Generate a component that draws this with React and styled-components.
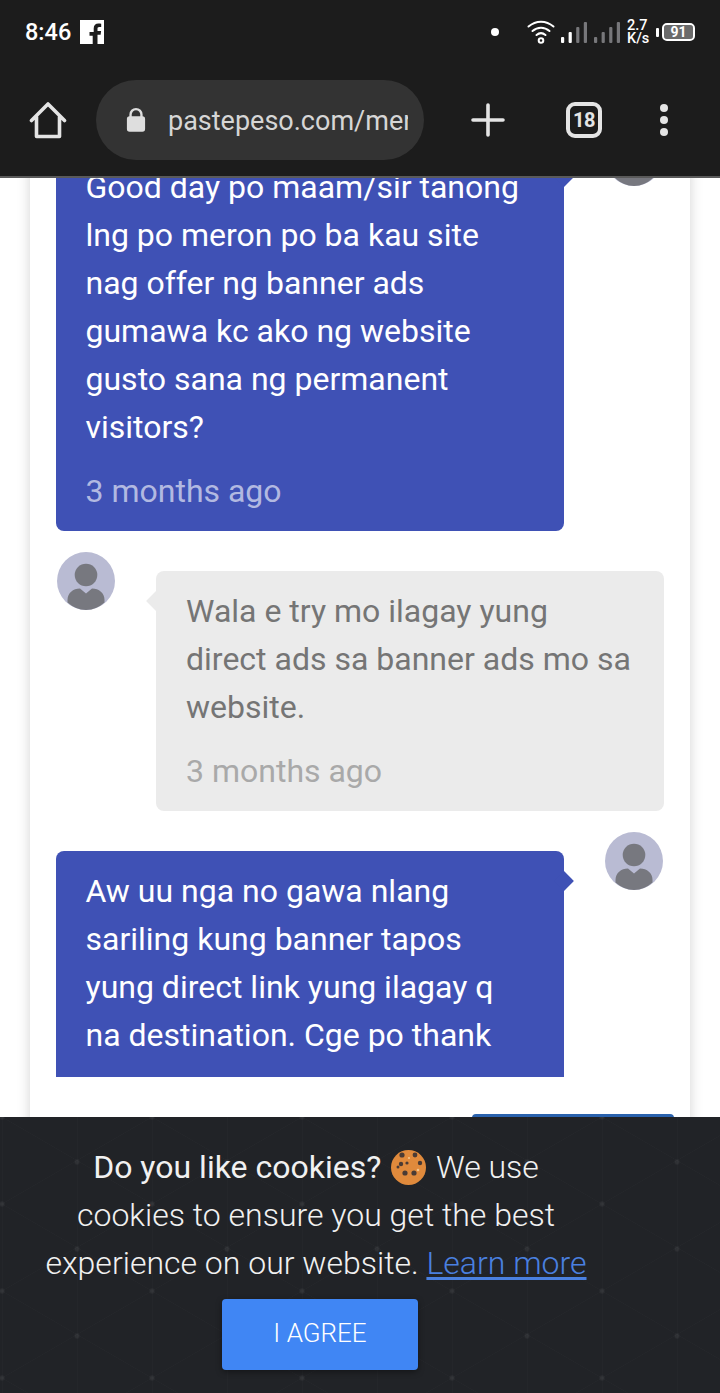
import React from "react";
import styled, { createGlobalStyle } from "styled-components";

const GlobalStyle = createGlobalStyle`
  html, body {
    margin: 0;
    padding: 0;
    background: #fff;
    font-family: Roboto, "Liberation Sans", sans-serif;
  }
  * {
    box-sizing: border-box;
  }
`;

const messages = [
  {
    id: 1,
    mine: true,
    text: "Good day po maam/sir tanong lng po meron po ba kau site nag offer ng banner ads gumawa kc ako ng website gusto sana ng permanent visitors?",
    time: "3 months ago",
  },
  {
    id: 2,
    mine: false,
    text: "Wala e try mo ilagay yung direct ads sa banner ads mo sa website.",
    time: "3 months ago",
  },
  {
    id: 3,
    mine: true,
    cut: true,
    text: "Aw uu nga no gawa nlang sariling kung banner tapos yung direct link yung ilagay q na destination. Cge po thank",
  },
];

const Avatar = () => (
  <AvatarIcon viewBox="0 0 58 58">
    <circle cx="29" cy="29" r="29" fill="#b9bbd3" />
    <circle cx="29" cy="23" r="11.300" fill="#77787f" />
    <path d="M29 41.500l6-5c7 0 12.500 4.500 12.500 11.500v2.500A29 29 0 0 1 29 58a29 29 0 0 1-18.500-7.500V48c0-7 5.500-11.500 12.500-11.500z" fill="#77787f" />
  </AvatarIcon>
);

const Bars = ({ lit }) => (
  <svg width="27" height="22" viewBox="0 0 27 22">
    {[0, 1, 2, 3].map((i) => (
      <rect
        key={i}
        x={i * 7.6}
        y={16 - i * 5}
        width="3.200"
        height={6 + i * 5}
        rx="1"
        fill={i < lit ? "#fff" : "#77777a"}
      />
    ))}
  </svg>
);

const App = () => {
  return (
    <React.Fragment>
      <GlobalStyle />
      <Screen>
        <Header>
          <StatusBar>
            <Clock>8:46</Clock>
            <svg width="24" height="24" viewBox="0 0 24 24">
              <path d="M0 0h24v24h-6.500v-9.300h3.100l.5-3.600h-3.600V8.800c0-1.100.3-1.800 1.800-1.800h1.900V3.800c-.3 0-1.500-.2-2.800-.2-2.800 0-4.700 1.700-4.700 4.800v3.700H9.500v3.600h3.200V24H0z" fill="#fff" />
            </svg>
            <StatusRight>
              <Dot />
              <svg width="28" height="26" viewBox="0 0 28 26">
                <g fill="none" stroke="#fff" strokeWidth="2" strokeLinecap="round">
                  <path d="M1.500 7.500C9 1 19 1 26.500 7.500" />
                  <path d="M5.500 12C10.500 7.500 17.500 7.500 22.500 12" />
                  <path d="M9.500 16c3-2.500 6-2.500 9 0" />
                  <circle cx="14" cy="21.500" r="2.300" />
                </g>
              </svg>
              <Bars lit={2} />
              <Bars lit={0} />
              <Speed>
                2.7
                <br />
                K/s
              </Speed>
              <Battery>
                <BatteryCap />
                <BatteryBody>91</BatteryBody>
              </Battery>
            </StatusRight>
          </StatusBar>
          <Toolbar>
            <svg width="38" height="38" viewBox="0 0 38 38">
              <path d="M2.500 19.500L19 3l16.500 16.500M7.500 16v19.500h23V16" fill="none" stroke="#e4e4e4" strokeWidth="3.600" strokeLinecap="round" strokeLinejoin="round" />
            </svg>
            <UrlPill>
              <LockIcon viewBox="0 0 22 28">
                <path d="M5 12V8a6 6 0 0 1 12 0v4" fill="none" stroke="#dedede" strokeWidth="2.600" />
                <rect x="1" y="10" width="20" height="17" rx="3" fill="#dedede" />
              </LockIcon>
              <UrlText>pastepeso.com/merchant</UrlText>
            </UrlPill>
            <svg width="34" height="34" viewBox="0 0 34 34">
              <path d="M17 2v30M2 17h30" stroke="#e4e4e4" strokeWidth="3.600" strokeLinecap="round" />
            </svg>
            <TabCount>18</TabCount>
            <MenuDots>
              <i />
              <i />
              <i />
            </MenuDots>
          </Toolbar>
        </Header>

        <Page>
          <Card>
            {messages.map((m) => (
              <Row key={m.id} $mine={m.mine}>
                <Avatar />
                <Bubble $mine={m.mine} $cut={m.cut}>
                  <BubbleText>{m.text}</BubbleText>
                  {m.time && <Time $mine={m.mine}>{m.time}</Time>}
                </Bubble>
              </Row>
            ))}
            <ReplyButton />
          </Card>
        </Page>

        <CookieBar>
          <CookieText>
            <strong>Do you like cookies?</strong>{" "}
            <CookieIcon viewBox="0 0 35 35">
              <circle cx="17.500" cy="17.500" r="17.500" fill="#e08a3c" />
              <circle cx="11" cy="5" r="2.600" fill="#4a3b35" />
              <circle cx="24" cy="5" r="2.400" fill="#4a3b35" />
              <circle cx="10" cy="14" r="2.200" fill="#4a3b35" />
              <circle cx="16" cy="13" r="1.600" fill="#4a3b35" />
              <circle cx="29" cy="13" r="2.200" fill="#4a3b35" />
              <circle cx="7" cy="17" r="1.500" fill="#4a3b35" />
              <circle cx="14" cy="23" r="2.600" fill="#4a3b35" />
              <circle cx="23" cy="23" r="2.600" fill="#4a3b35" />
              <circle cx="27" cy="20" r="1.300" fill="#f3c58c" />
              <circle cx="18" cy="8" r="1.100" fill="#f3c58c" />
            </CookieIcon>{" "}
            We use cookies to ensure you get the best experience on our website.{" "}
            <LearnMore href="#">Learn more</LearnMore>
          </CookieText>
          <AgreeButton>I AGREE</AgreeButton>
        </CookieBar>
      </Screen>
    </React.Fragment>
  );
};

const Screen = styled.div`
  position: relative;
  width: 720px;
  height: 1393px;
  overflow: hidden;
  display: flex;
  flex-direction: column;
  background: #fff;
`;

const Header = styled.header`
  position: relative;
  z-index: 2;
  flex: none;
  height: 178px;
  background: #1c1c1c;
  border-bottom: 2px solid #5a5a5a;
`;

const StatusBar = styled.div`
  height: 64px;
  display: flex;
  align-items: center;
  gap: 9px;
  padding: 0 25px;
`;

const Clock = styled.span`
  color: #fff;
  font-size: 23.500px;
  font-weight: 500;
`;

const StatusRight = styled.div`
  margin-left: auto;
  display: flex;
  align-items: center;
  gap: 6px;
`;

const Dot = styled.span`
  width: 8px;
  height: 8px;
  margin-right: 22px;
  border-radius: 50%;
  background: #fff;
`;

const Speed = styled.span`
  width: 23px;
  color: #fff;
  font-size: 14.500px;
  font-weight: 500;
  line-height: 13px;
`;

const Battery = styled.div`
  display: flex;
  align-items: center;
  gap: 3px;
`;

const BatteryCap = styled.span`
  width: 3px;
  height: 9px;
  border-radius: 1px;
  background: #fff;
`;

const BatteryBody = styled.span`
  width: 33px;
  height: 18px;
  border: 2px solid #fff;
  border-radius: 5px;
  background: #6a6a6a;
  background-clip: padding-box;
  color: #fff;
  font-size: 14px;
  font-weight: 700;
  line-height: 14px;
  text-align: center;
`;

const Toolbar = styled.div`
  height: 112px;
  display: flex;
  align-items: center;
  padding: 0 0 0 29px;
`;

const UrlPill = styled.div`
  flex: none;
  width: 328px;
  height: 80px;
  margin: 0 47px 0 29px;
  padding: 0 16px 0 30px;
  display: flex;
  align-items: center;
  gap: 22px;
  border-radius: 40px;
  background: #333333;
`;

const LockIcon = styled.svg`
  flex: none;
  width: 20px;
  height: 26px;
`;

const UrlText = styled.span`
  overflow: hidden;
  padding-top: 2px;
  white-space: nowrap;
  color: #d6d6d6;
  font-size: 27px;
`;

const TabCount = styled.span`
  width: 36px;
  height: 36px;
  margin-left: 61px;
  border: 4px solid #e4e4e4;
  border-radius: 9px;
  color: #e4e4e4;
  font-size: 20px;
  font-weight: 700;
  line-height: 28px;
  text-align: center;
  letter-spacing: -0.5px;
`;

const MenuDots = styled.div`
  margin-left: 58px;
  display: flex;
  flex-direction: column;
  gap: 4px;

  i {
    width: 8px;
    height: 8px;
    border-radius: 50%;
    background: #e4e4e4;
  }
`;

const Page = styled.main`
  flex: 1;
  min-height: 0;
  padding: 0 30px;
`;

const Card = styled.div`
  margin-top: -50px;
  padding: 0 26px;
  display: flex;
  flex-direction: column;
  background: #fff;
  box-shadow: 0 0 12px rgba(0, 0, 0, 0.18);
`;

const Row = styled.div`
  display: flex;
  flex-direction: ${(p) => (p.$mine ? "row-reverse" : "row")};
  justify-content: space-between;
  align-items: flex-start;
  margin-bottom: 21px;
  padding: ${(p) => (p.$mine ? "0 1px 0 0" : "0 0 0 1px")};
`;

const AvatarIcon = styled.svg`
  flex: none;
  width: 58px;
  height: 58px;
`;

const Bubble = styled.div`
  position: relative;
  width: 508px;
  margin-top: 19px;
  padding: ${(p) => (p.$cut ? "16px 30px 18px" : "16px 30px")};
  padding-left: ${(p) => (p.$mine ? "29.500px" : "30px")};
  border-radius: ${(p) => (p.$cut ? "8px 8px 0 0" : "8px")};
  background: ${(p) => (p.$mine ? "#3f51b5" : "#ebebeb")};
  color: ${(p) => (p.$mine ? "#fff" : "#757575")};

  &::after {
    content: "";
    position: absolute;
    top: 23px;
    ${(p) => (p.$mine ? "right: -7px" : "left: -7px")};
    width: 14px;
    height: 14px;
    background: inherit;
    transform: rotate(45deg);
  }
`;

const BubbleText = styled.div`
  font-size: 32px;
  line-height: 48px;
`;

const Time = styled.div`
  margin-top: 16px;
  font-size: 32px;
  line-height: 48px;
  color: ${(p) => (p.$mine ? "#b2b9e1" : "#a9a9a9")};
`;

const ReplyButton = styled.div`
  align-self: flex-end;
  width: 202px;
  height: 60px;
  margin: 16px -10px 0 0;
  border-radius: 4px;
  background: #2a62ad;
`;

const CookieBar = styled.aside`
  position: absolute;
  z-index: 3;
  left: 0;
  right: 0;
  bottom: 0;
  height: 276px;
  padding: 26px 80px 0 0;
  display: flex;
  flex-direction: column;
  align-items: center;
  background-color: #212327;
  background-image:
    radial-gradient(circle, rgba(255, 255, 255, 0.06) 2px, transparent 3px),
    radial-gradient(circle, rgba(255, 255, 255, 0.06) 2px, transparent 3px),
    linear-gradient(to top right, transparent calc(50% - 0.5px), rgba(255, 255, 255, 0.018) 50%, transparent calc(50% + 0.5px)),
    linear-gradient(to bottom right, transparent calc(50% - 0.5px), rgba(255, 255, 255, 0.018) 50%, transparent calc(50% + 0.5px)),
    linear-gradient(to right, rgba(255, 255, 255, 0.012) 1px, transparent 1px);
  background-size: 150px 87px, 150px 87px, 150px 87px, 150px 87px, 75px 100%;
  background-position: 77px -43.5px, 2px 1.5px, 2px 0, 2px 0, 2px 0;
`;

const CookieText = styled.p`
  width: 544px;
  margin: 0 8px 0 0;
  color: #f1f1f1;
  font-size: 32px;
  font-weight: 300;
  line-height: 48px;
  text-align: center;

  strong {
    font-weight: 400;
  }
`;

const CookieIcon = styled.svg`
  width: 35px;
  height: 35px;
  margin: 0 2px;
  vertical-align: -7px;
`;

const LearnMore = styled.a`
  color: #4a80e0;
  text-decoration-thickness: 3px;
  text-underline-offset: 3px;
`;

const AgreeButton = styled.button`
  width: 196px;
  height: 71px;
  margin-top: 12px;
  padding: 0 0 3px;
  border: 0;
  border-radius: 4px;
  background: #4086f4;
  box-shadow: 0 2px 6px rgba(0, 0, 0, 0.4);
  color: #fff;
  font-family: Roboto, "Liberation Sans", sans-serif;
  font-size: 26px;
  font-weight: 300;
`;

export default App;
